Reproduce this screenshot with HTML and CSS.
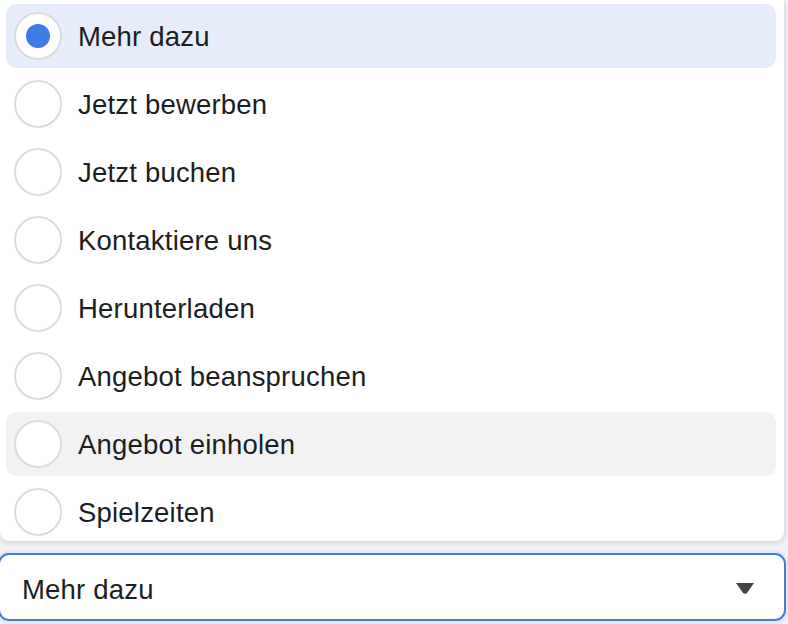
FILE: index.html
```html
<!DOCTYPE html>
<html lang="de">
<head>
<meta charset="utf-8">
<link rel="stylesheet" href="styles.css">
</head>
<body>
<div class="page">
  <div class="menu">
    <div class="option selected"><span class="radio"><span class="dot"></span></span><span class="label">Mehr dazu</span></div>
    <div class="option"><span class="radio"></span><span class="label">Jetzt bewerben</span></div>
    <div class="option"><span class="radio"></span><span class="label">Jetzt buchen</span></div>
    <div class="option"><span class="radio"></span><span class="label">Kontaktiere uns</span></div>
    <div class="option"><span class="radio"></span><span class="label">Herunterladen</span></div>
    <div class="option"><span class="radio"></span><span class="label">Angebot beanspruchen</span></div>
    <div class="option hover"><span class="radio"></span><span class="label">Angebot einholen</span></div>
    <div class="option"><span class="radio"></span><span class="label">Spielzeiten</span></div>
  </div>
  <div class="select">
    <span class="select-label">Mehr dazu</span>
    <svg class="caret" width="18" height="11" viewBox="0 0 18 11"><path d="M0 0 H18 L11 10 Q9 11.5 7 10 Z" fill="#444"/></svg>
  </div>
</div>
</body>
</html>
```
FILE: styles.css
```css
html, body {
  margin: 0;
  padding: 0;
}
body {
  width: 788px;
  height: 624px;
  overflow: hidden;
  background: #f0f1f4;
  font-family: "Liberation Sans", Arial, sans-serif;
  color: #1c1e21;
}
.page {
  width: 788px;
  height: 624px;
  display: flex;
  flex-direction: column;
}
.menu {
  width: 785px;
  height: 541px;
  box-sizing: border-box;
  background: #fff;
  border-right: 1px solid #dfe1e6;
  border-radius: 0 0 9px 9px;
  box-shadow: 0 2px 4px rgba(0, 0, 0, 0.12);
  padding: 4px 8px 0 6px;
  display: flex;
  flex-direction: column;
  gap: 4px;
  overflow: hidden;
}
.option {
  height: 64px;
  flex: 0 0 64px;
  display: flex;
  align-items: center;
  border-radius: 10px;
  padding-left: 8px;
}
.option.selected {
  background: #e6ecfa;
}
.option.hover {
  background: #f2f2f2;
}
.radio {
  width: 48px;
  height: 48px;
  box-sizing: border-box;
  border: 2px solid #dcdcdc;
  border-radius: 50%;
  background: #fff;
  display: flex;
  align-items: center;
  justify-content: center;
  flex: none;
}
.dot {
  width: 24px;
  height: 24px;
  border-radius: 50%;
  background: #3d7be9;
}
.label {
  margin-left: 16px;
  padding-top: 2px;
  font-size: 27.5px;
  letter-spacing: 0.2px;
}
.select {
  margin-top: 12px;
  margin-left: -2px;
  width: 788px;
  height: 68px;
  box-sizing: border-box;
  background: #fff;
  border: 2px solid #4a79d8;
  border-radius: 11px;
  box-shadow: 0 0 0 3px #e3e9f8;
  display: flex;
  align-items: center;
  padding: 0 30px 0 22px;
}
.select-label {
  flex: 1;
  padding-top: 5px;
  font-size: 27.5px;
  letter-spacing: 0.2px;
}
.caret {
  display: block;
  margin-top: 2px;
}
```
